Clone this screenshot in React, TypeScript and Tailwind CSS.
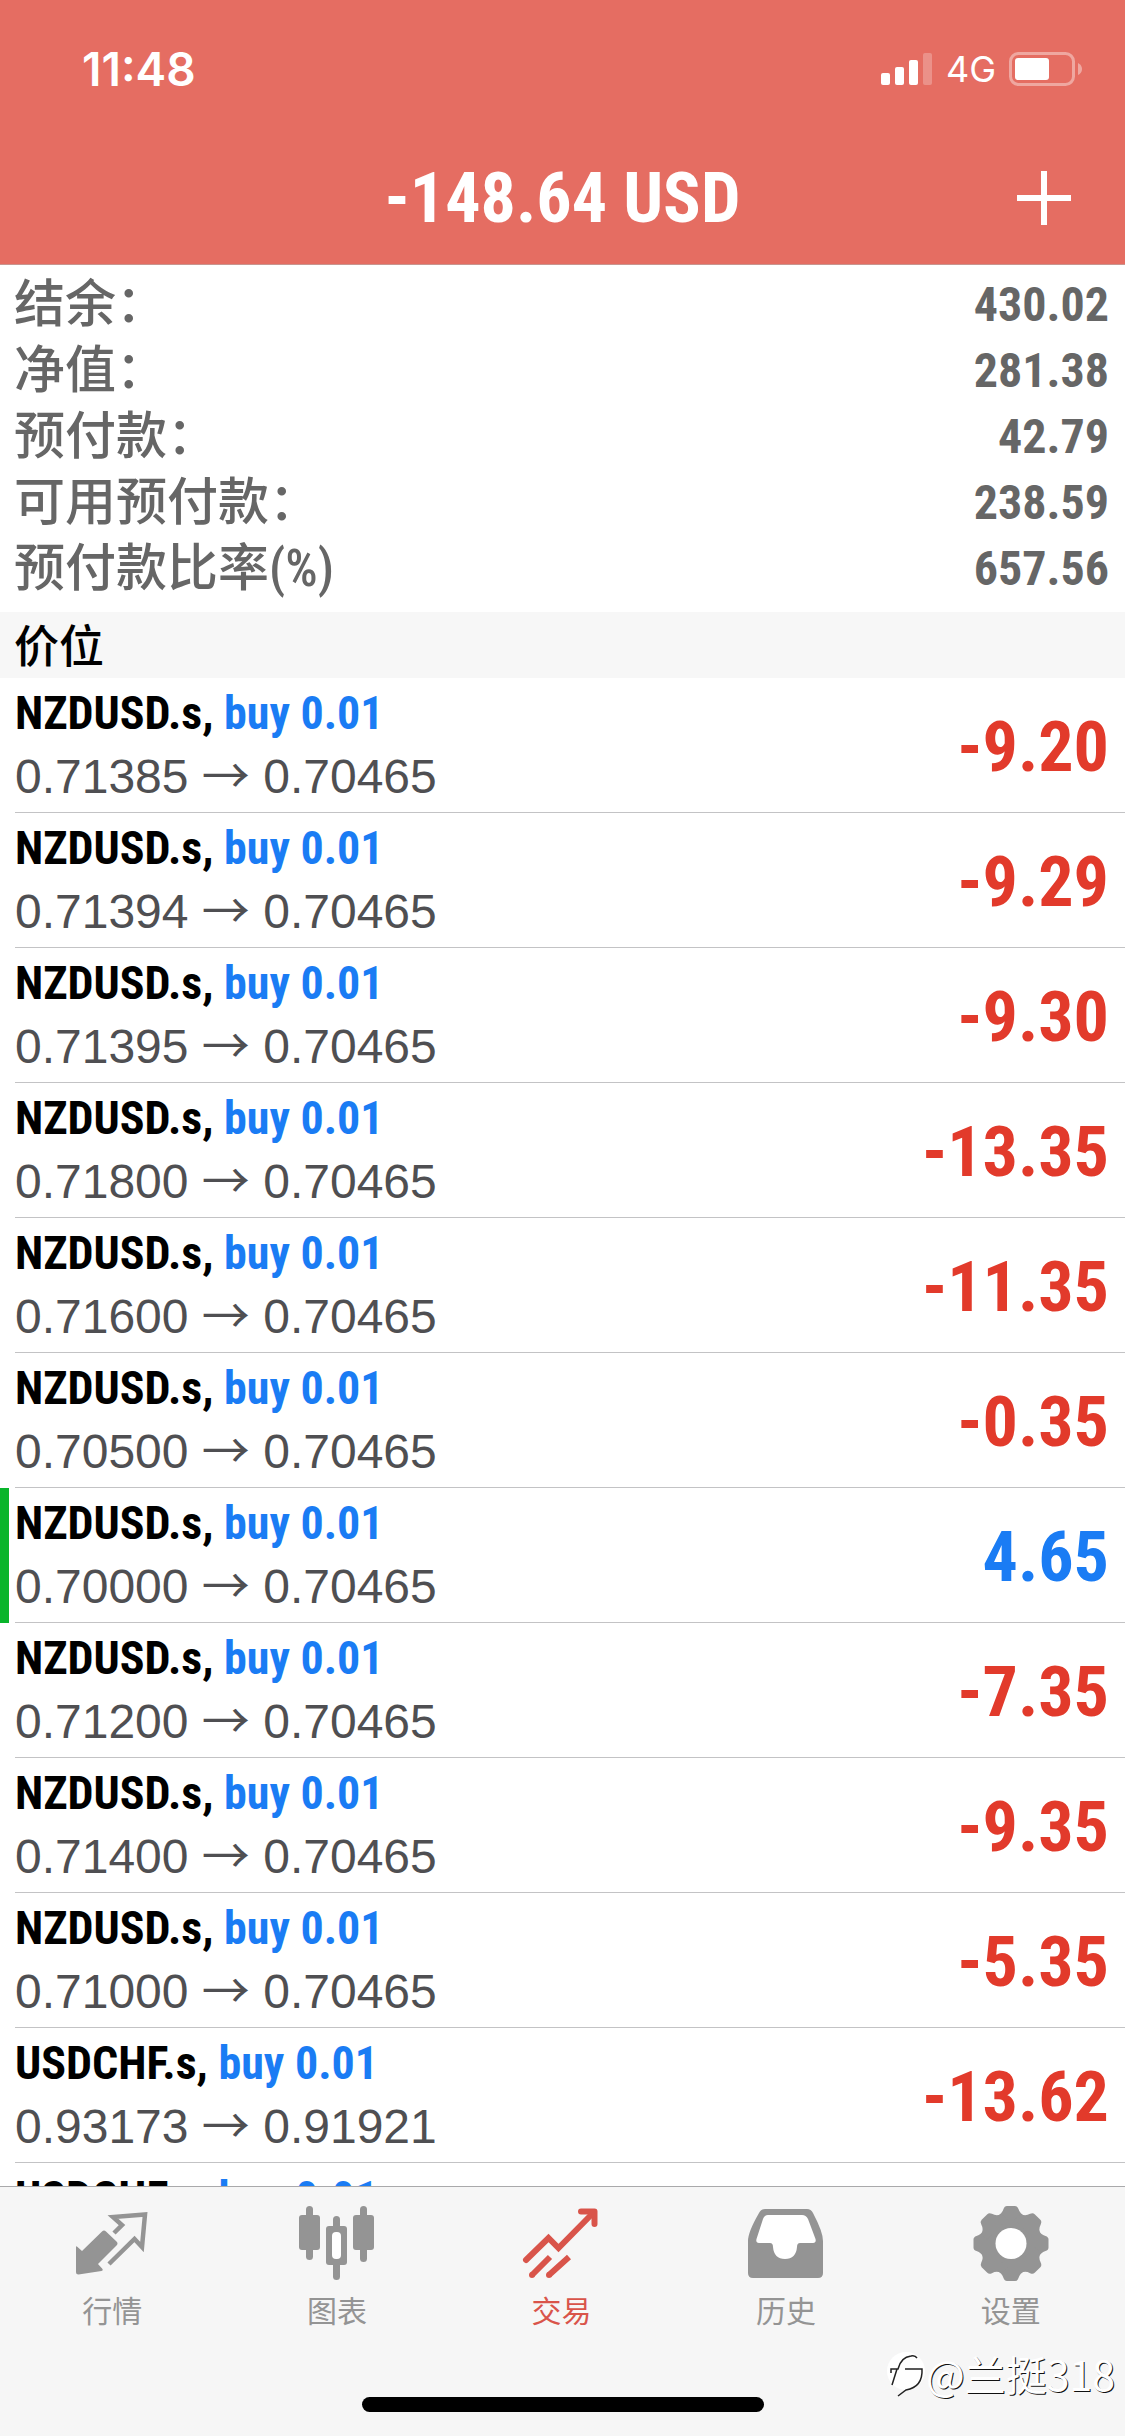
import { useState } from "react";
import type { ReactNode } from "react";

type Position = {
  symbol: string;
  open?: string;
  current?: string;
  profit?: string;
  marked?: boolean;
};

const summary = [
  { label: "结余：", value: "430.02" },
  { label: "净值：", value: "281.38" },
  { label: "预付款：", value: "42.79" },
  { label: "可用预付款：", value: "238.59" },
  { label: "预付款比率(%)", value: "657.56" },
];

const positions: Position[] = [
  { symbol: "NZDUSD.s", open: "0.71385", current: "0.70465", profit: "-9.20" },
  { symbol: "NZDUSD.s", open: "0.71394", current: "0.70465", profit: "-9.29" },
  { symbol: "NZDUSD.s", open: "0.71395", current: "0.70465", profit: "-9.30" },
  { symbol: "NZDUSD.s", open: "0.71800", current: "0.70465", profit: "-13.35" },
  { symbol: "NZDUSD.s", open: "0.71600", current: "0.70465", profit: "-11.35" },
  { symbol: "NZDUSD.s", open: "0.70500", current: "0.70465", profit: "-0.35" },
  { symbol: "NZDUSD.s", open: "0.70000", current: "0.70465", profit: "4.65", marked: true },
  { symbol: "NZDUSD.s", open: "0.71200", current: "0.70465", profit: "-7.35" },
  { symbol: "NZDUSD.s", open: "0.71400", current: "0.70465", profit: "-9.35" },
  { symbol: "NZDUSD.s", open: "0.71000", current: "0.70465", profit: "-5.35" },
  { symbol: "USDCHF.s", open: "0.93173", current: "0.91921", profit: "-13.62" },
  { symbol: "USDCHF.s" },
];

function QuotesIcon() {
  return (
    <svg viewBox="0 0 80 80" className="size-20" aria-hidden="true">
      <path
        d="M4 43.500Q4 41.500 5.500 43L10 47L30 27.500Q32 25.500 34 27.500L44.500 37.500Q46.500 39.500 44.500 41.500L26 60L30.500 65Q31.500 66.500 29.500 67L6.500 70.500Q4 70.500 4 68Z"
        fill="currentColor"
      />
      <path
        d="M42 29L50 21L41 13L73 10.500L70 43L62.500 35L37 60"
        fill="none"
        stroke="currentColor"
        strokeWidth="4.500"
      />
    </svg>
  );
}

function ChartIcon() {
  return (
    <svg viewBox="0 0 80 80" className="size-20" fill="currentColor" aria-hidden="true">
      <rect x="9" y="2" width="7" height="54" rx="3.500" />
      <rect x="2" y="11" width="21" height="35" rx="3" />
      <rect x="63" y="2" width="7" height="56" rx="3.500" />
      <rect x="56" y="11" width="21" height="35" rx="3" />
      <rect x="36" y="12" width="7" height="20" rx="3.500" />
      <rect x="36" y="54" width="7" height="22" rx="3.500" />
      <rect x="29" y="22" width="21" height="39" rx="3" />
      <rect x="35" y="28" width="9" height="27" rx="4" fill="#fff" />
    </svg>
  );
}

function TradeIcon() {
  return (
    <svg viewBox="0 0 80 80" className="size-20" fill="none" stroke="currentColor" strokeWidth="6" aria-hidden="true">
      <path d="M5 56L27.500 34L37.500 44L72 9" strokeLinecap="round" />
      <path d="M60 7.500H73.500V20" strokeLinecap="round" strokeLinejoin="round" />
      <path d="M11 71L29 53M28 71L48 53" />
      <circle cx="11" cy="71" r="3" fill="currentColor" stroke="none" />
      <circle cx="28" cy="71" r="3" fill="currentColor" stroke="none" />
    </svg>
  );
}

function HistoryIcon() {
  return (
    <svg viewBox="0 0 80 80" className="size-20" aria-hidden="true">
      <path
        d="M19 5H61Q65 5 67 9Q77 28 77 37V69Q77 74 72 74H7Q2 74 2 69V37Q2 28 13 9Q15 5 19 5Z"
        fill="currentColor"
      />
      <path
        d="M22 11H56Q60 11 62 15L69.500 35Q70.500 39 67 39H54Q51 39 51 43Q50 55 39 55Q28 55 27 43Q27 39 24 39H13Q9.500 39 10.500 35L17 15Q18.500 11 22 11Z"
        fill="#fff"
      />
    </svg>
  );
}

function SettingsIcon() {
  const angles = [0, 45, 90, 135, 180, 225, 270, 315];
  return (
    <svg viewBox="0 0 80 80" className="size-20" fill="currentColor" aria-hidden="true">
      <circle cx="40" cy="39.500" r="30" />
      {angles.map((angle) => (
        <path
          key={angle}
          d="M26 12Q31 10 32.500 5Q33.500 2 36 2H44Q46.500 2 47.500 5Q49 10 54 12V20H26Z"
          transform={`rotate(${angle} 40 39.500)`}
        />
      ))}
      <circle cx="40" cy="39.500" r="15.500" fill="#fff" />
    </svg>
  );
}

const tabs: { label: string; icon: ReactNode }[] = [
  { label: "行情", icon: <QuotesIcon /> },
  { label: "图表", icon: <ChartIcon /> },
  { label: "交易", icon: <TradeIcon /> },
  { label: "历史", icon: <HistoryIcon /> },
  { label: "设置", icon: <SettingsIcon /> },
];

function StatusBar() {
  return (
    <div className="flex h-[138px] items-center justify-between pr-[42px] pl-[82px]">
      <span className="font-['Inter',sans-serif] text-[46px] font-semibold">11:48</span>
      <div className="flex items-center gap-[13px]">
        <svg viewBox="0 0 52 34" className="h-[34px] w-[52px]" fill="currentColor" aria-hidden="true">
          <rect x="0" y="21" width="9" height="12" rx="2" />
          <rect x="14" y="15" width="9" height="18" rx="2" />
          <rect x="28" y="8" width="9" height="25" rx="2" />
          <rect x="42" y="1" width="9" height="32" rx="2" opacity="0.25" />
        </svg>
        <span className="font-['Inter',sans-serif] text-[36px]">4G</span>
        <svg viewBox="0 0 74 34" className="h-[34px] w-[74px]" aria-hidden="true">
          <rect x="1.500" y="1.500" width="63" height="31" rx="8" fill="none" stroke="#fff" strokeWidth="3" opacity="0.4" />
          <rect x="6" y="6" width="34" height="22" rx="3" fill="#fff" />
          <path d="M69 11Q73 13 73 17Q73 21 69 23Z" fill="#fff" opacity="0.4" />
        </svg>
      </div>
    </div>
  );
}

function PositionRow({ symbol, open, current, profit, marked }: Position) {
  return (
    <li className="flex h-[135px] shrink-0">
      <span className={marked ? "w-[9px] bg-[#09b52b]" : "w-[9px]"} />
      <div className="ml-[6px] flex flex-1 items-center justify-between border-b border-[#c3c3c5] pt-1 pr-4">
        <div className="h-[130px]">
          <p className="font-['Roboto_Condensed',sans-serif] text-[46px] leading-[62px] font-bold text-black">
            {symbol}, <span className="text-[#1a7cf4]">buy 0.01</span>
          </p>
          {open ? (
            <p className="font-['Liberation_Sans',Arial,sans-serif] text-[48px] leading-[56px] text-[#4f4f52]">
              {open} <span className="font-['Noto_Sans_CJK_SC',sans-serif]">→</span> {current}
            </p>
          ) : null}
        </div>
        {profit ? (
          <span
            className={`font-['Roboto_Condensed',sans-serif] text-[70px] leading-none font-bold ${
              profit.startsWith("-") ? "text-[#e23a2b]" : "text-[#1a7cf4]"
            }`}
          >
            {profit}
          </span>
        ) : null}
      </div>
    </li>
  );
}

export default function App() {
  const [active, setActive] = useState("交易");

  return (
    <div className="flex h-screen flex-col overflow-hidden bg-white font-['Noto_Sans_CJK_SC',sans-serif]">
      <header className="h-[265px] shrink-0 border-b border-[#c9958f] bg-[#e56d62] text-white">
        <StatusBar />
        <div className="grid h-[120px] grid-cols-[1fr_auto_1fr] items-center px-[54px]">
          <h1 className="col-start-2 font-['Roboto_Condensed',sans-serif] text-[70px] leading-none font-bold">
            -148.64 USD
          </h1>
          <button type="button" aria-label="新订单" className="justify-self-end">
            <svg viewBox="0 0 54 54" className="size-[54px]" stroke="currentColor" strokeWidth="6" aria-hidden="true">
              <path d="M27 0V54M0 27H54" />
            </svg>
          </button>
        </div>
      </header>

      <dl className="shrink-0 pt-[5px] pr-4 pb-3 pl-[14px] text-[#666]">
        {summary.map((item) => (
          <div
            key={item.label}
            className="flex h-[66px] justify-between font-['Roboto_Condensed','Noto_Sans_CJK_SC',sans-serif] leading-[70px]"
          >
            <dt className="text-[51px] font-medium">{item.label}</dt>
            <dd className="text-[48px] font-bold">{item.value}</dd>
          </div>
        ))}
      </dl>

      <h2 className="h-[66px] shrink-0 bg-[#f7f7f7] px-[14px] text-[45px] leading-[64px] font-medium text-black">
        价位
      </h2>

      <ul className="flex min-h-0 flex-1 flex-col overflow-hidden">
        {positions.map((position, index) => (
          <PositionRow key={index} {...position} />
        ))}
      </ul>

      <footer className="relative h-[250px] shrink-0 border-t border-[#a9a9ab] bg-[#f6f6f6]">
        <nav className="grid grid-cols-5 pt-[17px] pr-[2px]">
          {tabs.map((tab) => (
            <button
              key={tab.label}
              type="button"
              onClick={() => setActive(tab.label)}
              className={`flex flex-col items-center gap-[10px] ${active === tab.label ? "text-[#d9544a]" : "text-[#949494]"}`}
            >
              {tab.icon}
              <span className="text-[30px] leading-[30px]">{tab.label}</span>
            </button>
          ))}
        </nav>
        <div className="mx-auto mt-[73px] h-[15px] w-[402px] rounded-full bg-black" />
        <div className="absolute right-[10px] bottom-[38px] flex items-center">
          <svg viewBox="0 0 40 50" className="h-[50px] w-10" fill="none" aria-hidden="true">
            <circle cx="20" cy="23" r="19" fill="#fff" />
            <path
              d="M5 25V21H12Q15 9 25 8Q29 7 31 10M11 21L6 37M19 21H36Q37 39 20 42L12 48"
              stroke="#222"
              strokeWidth="1.500"
            />
          </svg>
          <span className="text-[41px] leading-[50px] text-white [text-shadow:1px_1px_0_#111]">@兰挺318</span>
        </div>
      </footer>
    </div>
  );
}
